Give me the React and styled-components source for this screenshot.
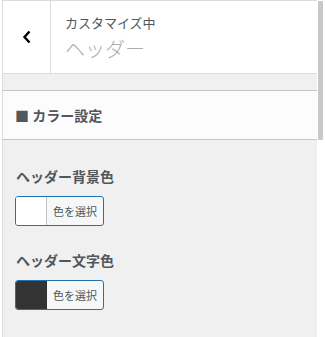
import React from 'react'
import styled, { createGlobalStyle } from 'styled-components'

const GlobalStyle = createGlobalStyle`
    html, body {
        margin: 0;
        padding: 0;
        background: #ffffff;
        font-family: "Noto Sans CJK JP", "Noto Sans", sans-serif;
    }
`

const Frame = styled.div`
    display: flex;
    height: 337px;
    overflow: hidden;
`

const Panel = styled.div`
    width: 315px;
    margin-left: 2px;
    border-left: 1px solid #dcdcde;
    border-top: 1px solid #dcdcde;
    display: flex;
    flex-direction: column;
    background-color: #f0f0f1;
`

const Header = styled.div`
    display: flex;
    height: 72px;
    background-color: #ffffff;
    border-bottom: 1px solid #dcdcde;
`

const BackButton = styled.button`
    width: 48px;
    border: none;
    border-right: 1px solid #dcdcde;
    background: #ffffff;
    display: flex;
    align-items: center;
    justify-content: center;
    padding: 0;
    color: #000;
`

const TitleBlock = styled.div`
    display: flex;
    flex-direction: column;
    padding: 13px 0 0 14px;
`

const Crumb = styled.span`
    font-size: 13px;
    line-height: 18px;
    color: #50575e;
`

const Title = styled.span`
    font-size: 20px;
    line-height: 28px;
    font-weight: 200;
    color: #a8adb2;
    margin-top: 3px;
`

const Spacer = styled.div`
    height: 16px;
    background-color: #f0f0f1;
    border-bottom: 1px solid #c3c4c7;
`

const SectionTitle = styled.h3`
    margin: 0;
    height: 49px;
    box-sizing: border-box;
    display: flex;
    align-items: center;
    padding: 0 0 1px 12px;
    font-size: 14px;
    font-weight: 700;
    color: #50575e;
    background-color: #fcfcfc;
    border-bottom: 1px solid #c3c4c7;
`

const Body = styled.div`
    display: flex;
    flex-direction: column;
    padding: 26px 0 0 12px;
`

const Control = styled.div`
    display: flex;
    flex-direction: column;
    margin-bottom: 24px;
`

const Label = styled.span`
    font-size: 14px;
    font-weight: 700;
    line-height: 20px;
    color: #50575e;
    margin-bottom: 10px;
    margin-left: 1px;
`

const ColorButton = styled.button`
    display: flex;
    align-items: stretch;
    width: 89px;
    height: 30px;
    padding: 0;
    border: 1px solid #2271b1;
    border-radius: 3px;
    background: #f6f7f7;
    overflow: hidden;
    font-family: inherit;
`

const Swatch = styled.span`
    width: 30px;
    background-color: ${p => p.$color};
    border-right: 1px solid ${p => p.$dark ? '#2c3338' : '#c3c4c7'};
`

const ButtonText = styled.span`
    flex: 1;
    display: flex;
    align-items: center;
    justify-content: center;
    font-size: 11px;
    color: #50575e;
`

const Track = styled.div`
    width: 7px;
    display: flex;
    flex-direction: column;
    padding: 1px 0 0 1px;
`

const Thumb = styled.div`
    width: 5px;
    height: 139px;
    background-color: #c8c8c8;
    border-radius: 1px;
`

const colors = [
    { label: 'ヘッダー背景色', color: '#ffffff', dark: false },
    { label: 'ヘッダー文字色', color: '#333333', dark: true },
]

export default function App() {
    return (
        <Frame>
            <GlobalStyle />
            <Panel>
                <Header>
                    <BackButton aria-label="戻る">
                        <svg width="10" height="14" viewBox="0 0 10 14">
                            <path d="M7.5 1.5 L2.5 7 L7.5 12.5" fill="none" stroke="#000" strokeWidth="2.4" />
                        </svg>
                    </BackButton>
                    <TitleBlock>
                        <Crumb>カスタマイズ中</Crumb>
                        <Title>ヘッダー</Title>
                    </TitleBlock>
                </Header>
                <Spacer />
                <SectionTitle>■ カラー設定</SectionTitle>
                <Body>
                    {colors.map(c => (
                        <Control key={c.label}>
                            <Label>{c.label}</Label>
                            <ColorButton>
                                <Swatch $color={c.color} $dark={c.dark} />
                                <ButtonText>色を選択</ButtonText>
                            </ColorButton>
                        </Control>
                    ))}
                </Body>
            </Panel>
            <Track>
                <Thumb />
            </Track>
        </Frame>
    )
}
